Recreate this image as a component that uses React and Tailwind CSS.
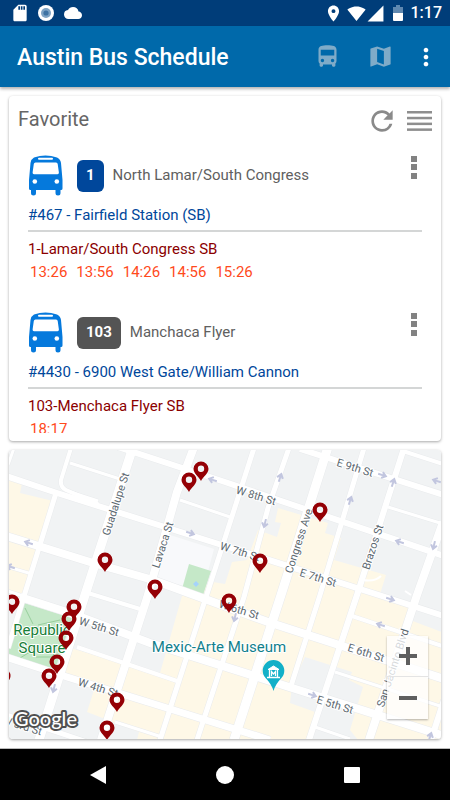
import React from "react";
import {
  MdCloud,
  MdDirectionsBus,
  MdLocationOn,
  MdMap,
  MdMoreVert,
  MdRefresh,
  MdSdCard,
  MdSignalCellular4Bar,
  MdSignalWifi4Bar,
} from "react-icons/md";

const favorites = [
  {
    route: "1",
    badge: "bg-[#00479b]",
    name: "North Lamar/South Congress",
    stop: "#467 - Fairfield Station (SB)",
    direction: "1-Lamar/South Congress SB",
    times: ["13:26", "13:56", "14:26", "14:56", "15:26"],
  },
  {
    route: "103",
    badge: "bg-[#545454]",
    name: "Manchaca Flyer",
    stop: "#4430 - 6900 West Gate/William Cannon",
    direction: "103-Menchaca Flyer SB",
    times: ["18:17"],
  },
];

// street lines: [path, width]
const streets = [
  // minor streets
  ["M70 463L120 479", 3],
  ["M180 500L230 517", 3],
  ["M388 507L440 523", 3],
  ["M8 567L32 574", 3],
  ["M8 591L23 596", 3],
  ["M88 593L140 609", 4],
  ["M77 647L177 681", 4],
  ["M115 722L162 737", 3],
  ["M352 616L442 646", 4],
  ["M335 672L440 706", 3],
  ["M315 727L350 739", 3],
  ["M403 451L443 464", 4],
  ["M14 448L8 465", 3],
  ["M71 448L61 480Q60 487 66 490L98 504", 4],
  ["M70 492L98 501", 3],
  // north - south
  ["M56 493L8 648", 5],
  ["M254 448L160 740", 5],
  ["M289 448L268 508L244 597L197 740", 5],
  ["M364 448L320 595L291 686", 5],
  ["M404 448L358 592L309 740", 6],
  ["M444 700L431 740", 6],
  // east - west
  ["M300 449L444 495", 6],
  ["M118 447L225 482L444 556", 6],
  ["M6 476L57 493L225 546L385 597L444 616", 6],
  ["M6 536L90 562L153 580L268 622L444 679", 8],
  ["M20 597L73 614L150 643L308 693L444 736", 8],
  ["M6 657L67 677L167 708L270 740", 7],
  ["M6 715L90 743", 5],
  // wide avenues
  ["M133 447L85 595L39 740", 9],
  ["M194 447L177 492L147 598L101 740", 8],
  ["M328 447L282 592L234 740", 9],
  ["M443 522L417 595L369 740", 8],
];

const labels = [
  ["Guadalupe St", 116, 504, -72],
  ["Lavaca St", 163, 545, -72],
  ["Congress Ave", 299, 541, -72],
  ["Brazos St", 373, 547, -72],
  ["San Jacinto Blvd", 393, 668, -72],
  ["E 9th St", 355, 468, 17],
  ["W 8th St", 256, 496, 17],
  ["W 7th St", 240, 552, 17],
  ["E 7th St", 318, 578, 17],
  ["W 6th St", 239, 610, 17],
  ["E 6th St", 366, 653, 17],
  ["W 5th St", 99, 627, 17],
  ["E 5th St", 335, 705, 17],
  ["W 4th St", 98, 688, 17],
  ["W 3rd St", 22, 726, 17],
];

const arrows = [
  [437, 481, 197],
  [29, 543, 197],
  [11, 567, 197],
  [190, 533, 17],
  [280, 478, -72],
  [265, 523, 104],
  [350, 501, -72],
  [393, 483, -72],
  [382, 475, 17],
  [400, 542, 197],
  [434, 545, 104],
  [390, 599, 17],
  [381, 625, 197],
  [312, 695, 17],
  [54, 688, 104],
  [213, 480, 197],
  [235, 617, 104],
  [430, 737, -72],
];

const pins = [
  [201, 481],
  [189, 492],
  [320, 522],
  [105, 572],
  [260, 573],
  [155, 599],
  [12, 614],
  [229, 613],
  [74, 619],
  [69, 631],
  [66, 650],
  [57, 674],
  [49, 688],
  [3, 688],
  [117, 712],
  [107, 740],
];

function StatusBar() {
  return (
    <div className="flex h-[26px] shrink-0 items-center bg-[#003d79] pr-2 pl-[10px] text-white">
      <MdSdCard size={20} />
      <svg width="16" height="16" viewBox="0 0 16 16" className="ml-2">
        <circle cx="8" cy="8" r="8" fill="#fff" />
        <circle cx="8" cy="8" r="5" fill="#7ea3c4" />
        <circle cx="8" cy="8" r="2.6" fill="#3f73a3" />
      </svg>
      <MdCloud size={18} className="ml-[10px]" />
      <div className="ml-auto flex items-center">
        <MdLocationOn size={19} />
        <MdSignalWifi4Bar size={19} className="ml-1" />
        <MdSignalCellular4Bar size={19} />
        <svg width="10" height="16" viewBox="0 0 10 16" className="ml-2">
          <path d="M0 2H3V0H7V2H10V8H0Z" fill="#5f88b0" />
          <path d="M0 8H10V15Q10 16 9 16H1Q0 16 0 15Z" fill="#fff" />
        </svg>
        <span className="ml-2 text-base font-medium">1:17</span>
      </div>
    </div>
  );
}

function AppBar() {
  return (
    <header className="z-10 flex h-[61px] shrink-0 items-center bg-[#0069aa] pr-[10px] pl-[17px] text-white shadow-[0_2px_3px_rgba(0,0,0,0.3)]">
      <h1 className="pt-1 text-[23px] font-medium">Austin Bus Schedule</h1>
      <button aria-label="Buses" className="ml-auto text-[#7fabc8]">
        <MdDirectionsBus size={27} />
      </button>
      <button aria-label="Map" className="ml-[26px] text-[#7fabc8]">
        <MdMap size={27} />
      </button>
      <button aria-label="More" className="ml-[18px]">
        <MdMoreVert size={28} />
      </button>
    </header>
  );
}

function BusIcon() {
  return (
    <svg width="35" height="41" viewBox="0 0 35 41">
      <path
        d="M6 2.400Q17.500 -1.600 29 2.400Q32.500 4 33 8L34.500 25V33.500Q34.500 35 33 35H32.500V38A2.500 2.500 0 0 1 27.500 38V35H8V38A2.500 2.500 0 0 1 3 38V35H2.500Q1 35 1 33.500V25L2.500 8Q3 4 6 2.400Z"
        fill="#0579dc"
      />
      <rect x="10" y="2.800" width="15" height="2" rx="1" fill="#fff" />
      <path d="M7.500 7.500H28Q29.500 7.500 29.700 9L30.900 17.500Q31 19.300 29.500 19.300H6Q4.500 19.300 4.600 17.500L5.800 9Q6 7.500 7.500 7.500Z" fill="#fff" />
      <circle cx="6.800" cy="26.500" r="2.300" fill="#fff" />
      <circle cx="28.800" cy="26.500" r="2.300" fill="#fff" />
    </svg>
  );
}

function FavoriteItem({ item }) {
  return (
    <li className="h-[157px] px-[19px] text-[15px] leading-[23px]">
      <div className="flex items-center">
        <BusIcon />
        <span className={`ml-[14px] flex h-8 items-center rounded-md px-[9px] font-bold text-white ${item.badge}`}>
          {item.route}
        </span>
        <span className="ml-[9px] text-[#606060]">{item.name}</span>
        <button aria-label="Options" className="ml-auto self-start px-[5px] pt-px">
          <svg width="6" height="23" viewBox="0 0 6 23" fill="#828282">
            <rect width="6" height="6" />
            <rect y="8" width="6" height="6" />
            <rect y="17" width="6" height="6" />
          </svg>
        </button>
      </div>
      <p className="mt-2 text-[#00479b]">{item.stop}</p>
      <hr className="mt-[3px] border-t-2 border-[#d4d6d6]" />
      <p className="mt-[6px] text-[#8b0000]">{item.direction}</p>
      <div className="flex gap-[9px] pl-[2px] text-[#ff4a1c]">
        {item.times.map((t) => (
          <span key={t}>{t}</span>
        ))}
      </div>
    </li>
  );
}

function Favorites() {
  return (
    <section className="flex min-h-0 flex-1 flex-col rounded-sm bg-white pb-2 shadow-[0_1px_3px_rgba(0,0,0,0.35)]">
      <div className="flex items-start px-[9px] pt-[9px] text-[#8a8a8a]">
        <h2 className="text-xl text-[#666]">Favorite</h2>
        <button aria-label="Refresh" className="ml-auto">
          <MdRefresh size={32} />
        </button>
        <button aria-label="List" className="ml-[9px] self-center">
          <svg width="25" height="20" viewBox="0 0 25 20" fill="#8e8e8e">
            <rect width="25" height="2.500" />
            <rect y="5.800" width="25" height="2.500" />
            <rect y="11.600" width="25" height="2.500" />
            <rect y="17.400" width="25" height="2.500" />
          </svg>
        </button>
      </div>
      <ul className="mt-[18px] min-h-0 flex-1 overflow-y-auto [scrollbar-width:none]">
        {favorites.map((item) => (
          <FavoriteItem key={item.route} item={item} />
        ))}
      </ul>
    </section>
  );
}

function StopMap() {
  return (
    <section className="relative shrink-0 overflow-hidden rounded-sm shadow-[0_1px_3px_rgba(0,0,0,0.35)]">
      <svg viewBox="9 450 432 289" preserveAspectRatio="xMidYMid slice" className="block h-[289px] w-full">
        <rect x="0" y="440" width="450" height="310" fill="#f1f3f4" />
        {/* commercial blocks */}
        <g fill="#fef8e7">
          <path d="M8 480L22 483L20 493L53 501L24 597L8 592Z" />
          <path d="M278 508L328 523L325 533L341 538L334 560L386 575L380 594L412 605L410 620L442 632V740H137L139 732L87 712L94 690L63 675L70 648L160 673L182 596L213 582L225 584L232 562L247 560L258 530L277 537L281 523L275 522Z" />
        </g>
        <path d="M305 657L352 672L349 680L363 687L350 730L358 740H308L315 712L290 703L292 685Z" fill="#f1f3f4" />
        <path d="M170 535L214 549L203 590L157 580Z" fill="#f8f9fb" />
        <path d="M189 564L211 571L203 595L182 589Z" fill="#c5e8c8" />
        <path d="M196 581L199 584L196 587L193 584Z" fill="#a5d3fb" />
        {/* Republic Square */}
        <path d="M24 603L72 618L55 670L8 656V650Z" fill="#c5e8c8" />
        <path d="M25 608L33 624M60 620L38 625M20 658L30 652M36 657H52L56 650" fill="none" stroke="#98cf9d" />
        <g fill="none" stroke="#e9ebed">
          {streets.map(([d, w]) => (
            <path key={d} d={d} strokeWidth={w + 1} />
          ))}
        </g>
        <g fill="none" stroke="#fff">
          {streets.map(([d, w]) => (
            <path key={d} d={d} strokeWidth={w} />
          ))}
          <path d="M363 580Q375 582 381 576M405 591L411 595" strokeWidth="2" />
        </g>
        <g fill="none" stroke="#c2c6df" strokeWidth="2">
          {arrows.map(([x, y, a]) => (
            <path key={`${x}-${y}`} d="M-4 0H3M0 -3L4 0L0 3" transform={`translate(${x} ${y}) rotate(${a})`} />
          ))}
        </g>
        <g
          fontSize="11"
          fill="#5c686f"
          stroke="#fff"
          strokeWidth="2"
          paintOrder="stroke"
          textAnchor="middle"
          dominantBaseline="central"
        >
          {labels.map(([text, x, y, a]) => (
            <text key={text} transform={`translate(${x} ${y}) rotate(${a})`}>
              {text}
            </text>
          ))}
        </g>
        <g fontSize="15" stroke="#fff" strokeWidth="2" paintOrder="stroke" textAnchor="middle">
          <text x="42" y="635" fill="#188038">Republic</text>
          <text x="42" y="653" fill="#188038">Square</text>
          <text x="219" y="652" fill="#12808c">Mexic-Arte Museum</text>
        </g>
        {/* museum marker */}
        <path d="M273.500 691Q271.500 684 266 678.500A10.800 10.800 0 1 1 281 678.500Q275.500 684 273.500 691Z" fill="#12b0c8" />
        <g fill="none" stroke="#fff">
          <path d="M268 669.500L273.500 666L279 669.500Z" fill="#fff" />
          <path d="M269.500 670V677M277.500 670V677M267 677.500H280M271.500 676V671.500L273.500 674L275.500 671.500V676" strokeWidth="1.300" />
        </g>
        {pins.map(([x, y]) => (
          <path
            key={`${x}-${y}`}
            d="M0 0C-2.500 -4.500 -7.500 -7.500 -7.500 -12.200A7.500 7.300 0 0 1 7.500 -12.200C7.500 -7.500 2.500 -4.500 0 0ZM0 -15.500A3.200 3.200 0 1 0 0 -9.100A3.200 3.200 0 1 0 0 -15.500Z"
            transform={`translate(${x} ${y})`}
            fill="#940005"
            fillRule="evenodd"
          />
        ))}
        <text x="14" y="726" className="font-[Lato] font-medium" fontSize="20" fill="#fff" stroke="#505050" strokeWidth="4" paintOrder="stroke" strokeLinejoin="round">
          Google
        </text>
      </svg>
      <div className="absolute right-[13px] bottom-5 flex flex-col divide-y divide-[#e4e4e4] bg-white/75 text-[#5f5f5f] shadow-[0_1px_2px_rgba(0,0,0,0.3)]">
        <button aria-label="Zoom in" className="flex h-[41px] w-[41px] items-center justify-center">
          <svg width="18" height="18" viewBox="0 0 18 18">
            <path d="M0 9H18M9 0V18" stroke="currentColor" strokeWidth="4" />
          </svg>
        </button>
        <button aria-label="Zoom out" className="flex h-[42px] w-[41px] items-center justify-center">
          <svg width="18" height="18" viewBox="0 0 18 18">
            <path d="M0 9H18" stroke="currentColor" strokeWidth="4" />
          </svg>
        </button>
      </div>
    </section>
  );
}

function NavBar() {
  return (
    <nav className="flex h-[52px] shrink-0 items-center justify-center gap-[109px] border-t border-[#bbb] bg-black text-white">
      <button aria-label="Back">
        <svg width="18" height="18" viewBox="0 0 18 18">
          <path d="M17 0V18L1 9Z" fill="currentColor" />
        </svg>
      </button>
      <button aria-label="Home">
        <svg width="18" height="18" viewBox="0 0 18 18">
          <circle cx="9" cy="9" r="9" fill="currentColor" />
        </svg>
      </button>
      <button aria-label="Recent apps">
        <svg width="18" height="18" viewBox="0 0 18 18">
          <rect x="1" y="1" width="16" height="16" rx="1" fill="currentColor" />
        </svg>
      </button>
    </nav>
  );
}

export default function App() {
  return (
    <div className="flex h-screen flex-col bg-white font-[Roboto,sans-serif]">
      <StatusBar />
      <AppBar />
      <main className="flex min-h-0 flex-1 flex-col gap-[9px] p-[9px]">
        <Favorites />
        <StopMap />
      </main>
      <NavBar />
    </div>
  );
}
